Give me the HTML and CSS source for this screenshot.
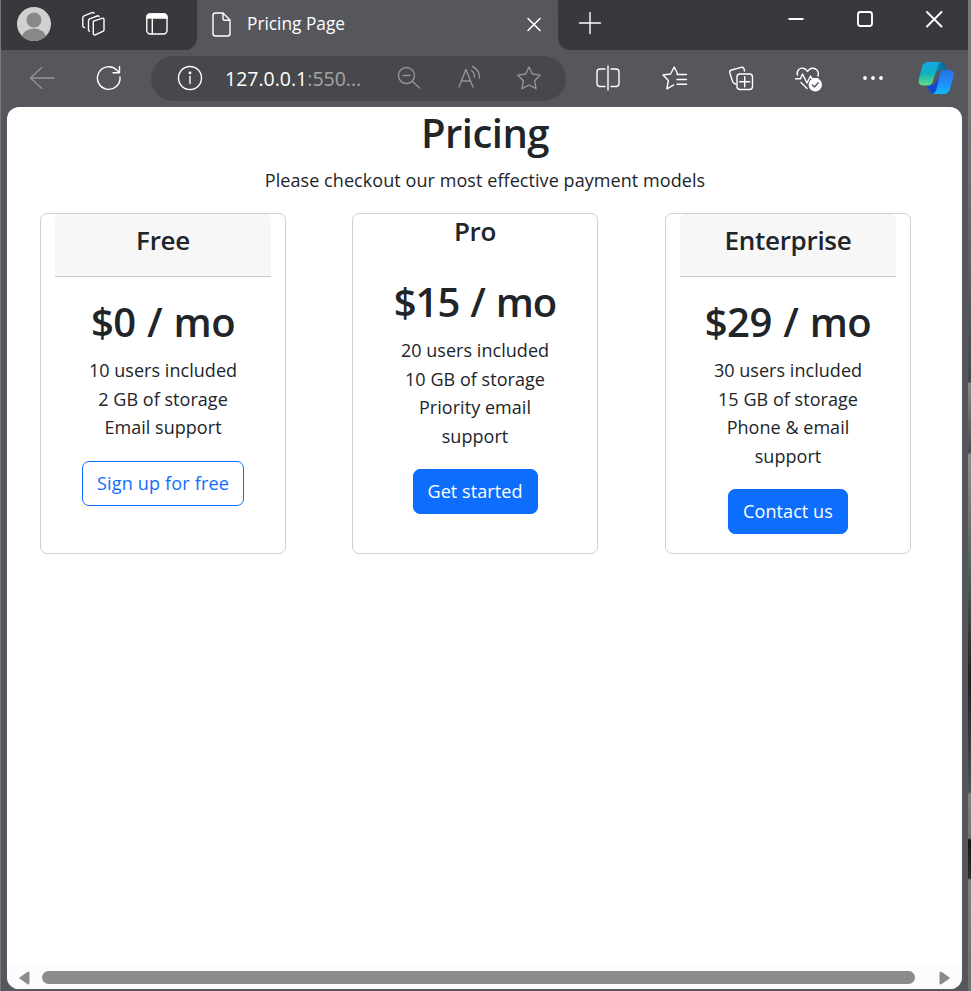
FILE: index.html
```html
<!DOCTYPE html>
<html lang="en">
<head>
<meta charset="utf-8">
<title>Pricing Page</title>
<link rel="stylesheet" href="styles.css">
</head>
<body>
<div class="window">
  <header class="tabstrip">
    <div class="profile">
      <svg width="34" height="34" viewBox="0 0 34 34"><defs><clipPath id="av"><circle cx="17" cy="17" r="17"/></clipPath></defs><g clip-path="url(#av)"><rect width="34" height="34" fill="#d2d0ce"/><circle cx="17" cy="13" r="7.5" fill="#8a8886"/><ellipse cx="17" cy="31" rx="12" ry="9.5" fill="#8a8886"/></g></svg>
    </div>
    <div class="strip-icon"><svg class="icon" viewBox="-1 0 30 30"><path d="M13.500 12.200 22 9.300c1.100-.4 2 .1 2 1.200v10.200c0 .8-.4 1.400-1.200 1.700l-7.500 3.400c-1.100.5-2-.1-2-1.300V13.800c0-.8-.3-1.300.2-1.600zM9.500 22.200 8.500 21.500V11.700c0-.9.400-1.500 1.200-1.800l7.500-2.900c1-.4 1.700-.2 2 .6M4.500 18.600l-1.200-.7c-.4-.3-.5-.7-.5-1.200V8.700c0-.9.400-1.500 1.200-1.800l8-3.200c.9-.4 1.700-.2 2 .5"/></svg></div>
    <div class="strip-icon"><svg class="icon" viewBox="0 0 30 30"><rect x="4.800" y="5" width="20.200" height="20" rx="3.500"/><path d="M5 9V8.500Q5 5 8.500 5h13Q25 5 25 8.500V9z" fill="#fff"/><path d="M10.300 10v15"/></svg></div>
    <div class="tab">
      <svg class="icon" viewBox="0 0 30 30"><path d="M9 4h8l7 7v13.500q0 2.500-2.500 2.500H9.500Q7 27 7 24.500v-18Q7 4 9.500 4zM17 4.200v5.300q0 1.800 1.800 1.800h5"/></svg>
      <span class="tab-title">Pricing Page</span>
      <svg class="icon tab-close" viewBox="0 0 30 30"><path d="m9 9.500 12 12M21 9.500l-12 12"/></svg>
    </div>
    <div class="rest">
      <svg class="icon newtab" viewBox="0 0 30 30"><path d="M15 4.500v21M4.500 15h21"/></svg>
      <div class="controls">
        <svg class="icon" viewBox="0 0 30 30"><path d="M7.500 15h15" stroke-width="2" stroke-linecap="butt"/></svg>
        <svg class="icon" viewBox="0 0 30 30"><rect x="8" y="8" width="14" height="14" rx="2.500" stroke-width="1.900"/></svg>
        <svg class="icon" viewBox="0 0 30 30"><path d="m8 8 14.500 14.500M22.500 8 8 22.500" stroke-width="1.900"/></svg>
      </div>
    </div>
  </header>
  <nav class="toolbar">
    <div class="nav-icon"><svg class="icon dim" viewBox="0 0 30 30"><path d="M27 15H3.500M14.800 4.600 3.500 15l11.300 10.400"/></svg></div>
    <div class="nav-icon"><svg class="icon" viewBox="0 0 30 30"><path d="M26 14a11.300 11.300 0 1 1-3.300-7l2.500 2.500M25.500 3.500v6.200h-6.500"/></svg></div>
    <div class="address">
      <svg class="icon" viewBox="0 0 30 30"><circle cx="15" cy="15" r="11.500"/><path d="M15 13.500v7"/><circle cx="15" cy="10" r=".7" fill="#fff"/></svg>
      <span class="url">127.0.0.1<span class="port">:550...</span></span>
      <div class="actions">
        <svg class="icon dim" viewBox="0 0 30 30"><circle cx="12.500" cy="12.500" r="8"/><path d="m18.500 18.500 7 6.500M9 12.500h7"/></svg>
        <svg class="icon dim" viewBox="-1 0 30 30"><path d="m4 24 6.900-17.500L18 24M6.300 18h9.400M16.500 7.500q3 2 3 6.500M17.500 3.500q7 3.500 7 11.500"/></svg>
        <svg class="icon dim" viewBox="0 0 30 30"><path d="m15 4 3.400 7 7.900 1.100-5.700 5.600 1.400 8L15 22l-7 3.700 1.400-8-5.700-5.600L11.600 11z"/></svg>
      </div>
    </div>
    <div class="tool"><svg class="icon" viewBox="0 0 30 30"><path d="M12 6H7Q4 6 4 9v11.500q0 3 3 3h5M18 6h5q3 0 3 3v11.500q0 3-3 3h-5M15 3v24"/></svg></div>
    <div class="tool"><svg class="icon" viewBox="0 0 30 30"><path d="M17.500 10.500 14.200 4l-3.600 7-7.600 1 5.400 5.500-1.600 8.300 6.700-3.700M17 11.500h9.500M17 16.500h9.500M17 21.300h9.500"/></svg></div>
    <div class="tool"><svg class="icon" viewBox="0 0 30 30"><rect x="11" y="11" width="15.500" height="15.500" rx="3"/><path d="M18.700 13.800v10M13.700 18.800h10M18.500 8 18 5.800q-.6-2-2.800-1.400L5.500 7Q3.200 7.600 3.800 10l2.800 8.500Q7.300 20.400 9.500 21"/></svg></div>
    <div class="tool"><svg class="icon" viewBox="-1 0 30 30"><path d="M4.500 12C3 7.500 7 4.500 10.300 5.300Q13 6 14.500 8.500 16 6 18.700 5.300C23 4.500 26.500 8.500 25 13M2.500 15.700h5l2-4.700 4.500 9 3.500-7 1.500 2.700H25M8 19.500l6 6"/><circle cx="22.300" cy="21.700" r="6.700" fill="#fff" stroke="none"/><path d="m19.300 22 2.200 2 3.700-4.200" stroke="#56575c"/></svg></div>
    <div class="tool"><svg class="icon" viewBox="1 0 30 30"><g fill="#fff" stroke="none"><circle cx="7" cy="15" r="1.900"/><circle cx="15" cy="15" r="1.900"/><circle cx="23" cy="15" r="1.900"/></g></svg></div>
    <div class="copilot"><svg width="38" height="36" viewBox="0 0 38 36">
      <defs>
        <linearGradient id="ga" x2="0" y2="1"><stop stop-color="#12a9e8"/><stop offset=".5" stop-color="#12b2bd"/><stop offset="1" stop-color="#62df83"/></linearGradient>
        <linearGradient id="gb" x2="0" y2="1"><stop stop-color="#2873df"/><stop offset=".6" stop-color="#2090ff"/><stop offset="1" stop-color="#12bdf2"/></linearGradient>
        <linearGradient id="gc"><stop stop-color="#1188c8"/><stop offset="1" stop-color="#07668c"/></linearGradient>
      </defs>
      <path d="M17 2h6q4 0 5.500 4l1.500 4h-6q-4 0-5 4z" fill="url(#gc)"/>
      <path d="M9 25h8l6-9-3 18h-3q-4 0-5-4z" fill="#1547d5"/>
      <path d="M11 2h14q-3 0-4.500 5L16 21q-1.500 4.500-5 4.500H6q-5.500 0-4-7L5 7q1.500-5 6-5z" fill="url(#ga)"/>
      <path d="M26 10h6q6 0 4.500 6l-3.500 13q-1.500 5-6 5H15q3 0 4.500-5L23 14q1-4 3-4z" fill="url(#gb)"/>
    </svg></div>
  </nav>
  <div class="page">
    <main class="content">
      <div class="intro">
        <h1>Pricing</h1>
        <p>Please checkout our most effective payment models</p>
      </div>
      <div class="cards">
        <section class="card">
          <div class="card-header"><h4>Free</h4></div>
          <div class="card-body">
            <h1>$0 / mo</h1>
            <ul><li>10 users included</li><li>2 GB of storage</li><li>Email support</li></ul>
            <button class="btn outline w-free">Sign up for free</button>
          </div>
        </section>
        <section class="card pro">
          <h4>Pro</h4>
          <div class="card-body">
            <h1>$15 / mo</h1>
            <ul><li>20 users included</li><li>10 GB of storage</li><li>Priority email<br>support</li></ul>
            <button class="btn w-pro">Get started</button>
          </div>
        </section>
        <section class="card">
          <div class="card-header"><h4>Enterprise</h4></div>
          <div class="card-body">
            <h1>$29 / mo</h1>
            <ul><li>30 users included</li><li>15 GB of storage</li><li>Phone &amp; email<br>support</li></ul>
            <button class="btn w-ent">Contact us</button>
          </div>
        </section>
      </div>
    </main>
    <div class="scrollbar">
      <svg width="12" height="14" viewBox="0 0 12 14"><path d="M10 1 1.500 7l8.500 6q1 .5 1-1V2q0-1.500-1-1z" fill="#8b8b8b" stroke="#8b8b8b"/></svg>
      <div class="thumb"></div>
      <svg width="12" height="14" viewBox="0 0 12 14"><path d="m2 1 8.500 6L2 13q-1 .5-1-1V2q0-1.500 1-1z" fill="#8b8b8b" stroke="#8b8b8b"/></svg>
    </div>
  </div>
</div>
<div class="backdrop"></div>
</body>
</html>
```
FILE: styles.css
```css
* { box-sizing: border-box; }
body {
  margin: 0;
  width: 971px;
  height: 991px;
  overflow: hidden;
  display: flex;
  font-family: "Open Sans", "Noto Sans", sans-serif;
  color: #212529;
}
.window {
  width: 968px;
  height: 991px;
  background: #56575c;
  border-left: 1px solid #77777a;
  display: flex;
  flex-direction: column;
}
.backdrop {
  width: 3px;
  background: linear-gradient(#777 0 107px, #697270 180px, #414b49 382px, #858b89 383px, #454e4c 452px, #8b918e 455px, #4e5b56 580px, #1b211f 680px, #4b555a 792px, #7b827e 794px, #6f7572 838px, #101614 840px, #27302c 878px, #7b827e 880px, #6a716e);
}
.icon {
  width: 30px;
  height: 30px;
  flex: none;
  fill: none;
  stroke: #fff;
  stroke-width: 1.4;
  stroke-linecap: round;
  stroke-linejoin: round;
}
.dim { stroke: #949496; }

.tabstrip {
  display: flex;
  height: 50px;
  flex: none;
  background: linear-gradient(90deg, #38393d 0 180px, #56575c 180px 570px, #38393d 570px);
}
.profile { width: 62px; padding: 7px 0 0 16px; }
.strip-icon { width: 63px; padding: 9px 0 0 16px; background: #38393d; }
.strip-icon:nth-child(3) { width: 71px; border-radius: 0 0 12px 0; }
.tab {
  width: 361px;
  height: 50px;
  background: #56575c;
  border-radius: 10px 10px 0 0;
  display: flex;
  align-items: center;
  padding: 0 9px 2px 9px;
}
.tab-title { color: #fff; font-size: 17.300px; letter-spacing: 0; margin: -1px 0 0 11px; }
.tab-close { margin-left: auto; stroke-width: 1.600; }
.rest {
  flex: 1;
  display: flex;
  justify-content: space-between;
  background: #38393d;
  border-radius: 0 0 0 12px;
  padding-left: 17px;
}
.newtab { margin-top: 8px; }
.controls { display: flex; gap: 39px; padding: 4px 19px 0 0; }

.toolbar { display: flex; align-items: center; height: 57px; padding-bottom: 1px; flex: none; }
.nav-icon { width: 67px; padding-left: 26px; height: 30px; }
.nav-icon + .nav-icon { width: 83px; }
.address {
  width: 415px;
  height: 45px;
  border-radius: 23px;
  background: #47484b;
  display: flex;
  align-items: center;
  padding: 0 22px 0 24px;
  margin-right: 9px;
}
.url { color: #fff; font-size: 19.500px; letter-spacing: 0; margin-left: 20px; }
.port { color: #a5a5a6; }
.actions { display: flex; gap: 30px; margin-left: auto; }
.tool { width: 66.400px; display: flex; justify-content: center; }
.copilot { width: 38px; height: 36px; margin-left: 10px; }

.page {
  width: 955px;
  height: 882px;
  margin-left: 6px;
  background: #fff;
  border-radius: 12px;
  display: flex;
  flex-direction: column;
}
.content { flex: 1; font-size: 18px; line-height: 28.700px; text-align: center; }
h1, h4 { margin: 0 0 9.600px; font-weight: 570; }
h1 { font-size: 40px; line-height: 49.600px; letter-spacing: -.5px; word-spacing: 1.500px; }
h4 { font-size: 26px; line-height: 32.800px; letter-spacing: -.3px; }
.intro { padding-left: 1px; }
.intro h1 { line-height: 52px; margin-bottom: 7px; }
p { margin: 0; height: 47px; letter-spacing: .07px; }
.cards { display: flex; gap: 66.500px; padding-left: 33px; }
.card {
  width: 246px;
  height: 341px;
  flex: none;
  border: 1px solid #d0d0d1;
  border-radius: 7px;
  padding: 0 14px;
}
.pro { margin: 0 .5px 0 -.5px; }
.pro h4 { padding-top: .5px; }
.pro h1 { letter-spacing: -1px; }
.card-header {
  height: 63px;
  padding: 10.300px 0 0;
  background: #f7f7f7;
  border-bottom: 1px solid #c8c8c9;
  border-radius: 6px 6px 0 0;
}
.card-body { padding: 19.800px 0 0; }
ul { list-style: none; margin: 0 0 18.500px; padding: 0; letter-spacing: .04px; }
.btn {
  height: 45px;
  border: 1px solid #0d6efd;
  border-radius: 7px;
  background: #0d6efd;
  color: #fff;
  font: inherit;
  padding: 0;
  letter-spacing: .08px;
  display: block;
  margin: 0 auto;
  white-space: nowrap;
}
.outline { background: #fff; color: #0d6efd; letter-spacing: .18px; }
.w-free { width: 162px; }
.w-pro { width: 125px; }
.w-ent { width: 120px; }

.scrollbar {
  height: 23px;
  flex: none;
  background: #fcfcfc;
  border-radius: 0 0 12px 12px;
  display: flex;
  align-items: center;
  padding: 0 11px;
}
.thumb { width: 873px; height: 13px; border-radius: 7px; background: #8b8b8b; margin: 0 auto 0 12px; }
```
